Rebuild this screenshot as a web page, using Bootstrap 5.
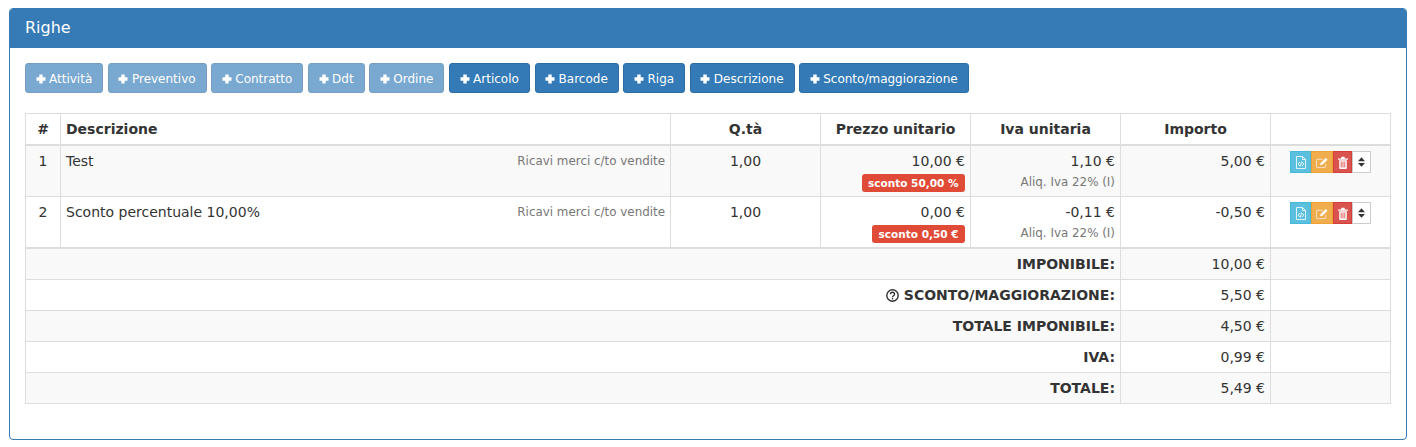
<!DOCTYPE html>
<html lang="it">
<head>
<meta charset="utf-8">
<title>Righe</title>
<link href="https://cdn.jsdelivr.net/npm/bootstrap@5.3.0/dist/css/bootstrap.min.css" rel="stylesheet">
<style>
body{font-family:"DejaVu Sans",sans-serif;font-size:14px;line-height:20px;color:#333;background:#fff;padding:8px 9px 7px 9px}
.righe-box{border:1px solid #367ab6;border-radius:4px;height:432px;overflow:hidden}
.righe-head{background:#367ab6;color:#fff;font-size:16px;line-height:22px;padding:8px 15px 9px;height:39px}
.righe-body{padding:15px}
.tool-row{display:flex;gap:4.7px;margin-bottom:20px}
.add-btn{font-size:12px;line-height:18px;padding:6px 10px 4px;height:30px;border:1px solid #2e6da4;background:#337ab7;color:#fff;border-radius:3px;white-space:nowrap;display:inline-flex;align-items:center;text-decoration:none}
.add-btn.is-off{opacity:.65;pointer-events:none}
.add-btn svg{width:10px;height:10px;margin:-1px 3.500px 0 -.5px;fill:#fff;flex:none}
.righe-table{width:1365px;table-layout:fixed;border-collapse:collapse;margin:0;color:#333}
.righe-table th,.righe-table td{border:1px solid #ddd;padding:5px;line-height:20px;vertical-align:top;background:transparent;box-shadow:none}
.righe-table thead th{border-bottom:2px solid #ddd;text-align:center;height:31px}
.righe-table thead th.th-left{text-align:left}
.righe-table tr.zebra>td{background:#f9f9f9}
.righe-table tbody.lines td{padding-bottom:4px}
.righe-table tbody.totals tr:first-child td{border-top:2px solid #ddd}
.righe-table tbody.totals td{height:31px}
.righe-table tbody.lines tr:last-child td{border-bottom:2px solid #ddd}
.conto{color:#777;font-size:11.9px;float:right}
.sub-note{color:#777;font-size:11.9px;line-height:17px;margin-top:3px}
.tag-wrap{display:flex;justify-content:flex-end;margin-top:3px}
.sconto-tag{background:#e04b37;color:#fff;font-size:10.5px;font-weight:700;line-height:12px;padding:3px 6.500px;border-radius:3px;white-space:nowrap}
.act-group{display:inline-flex;vertical-align:top;height:22px}
.act-btn{height:22px;display:flex;align-items:center;justify-content:center;border:1px solid}
.act-btn svg{width:12px;height:13px;display:block}
.act-info{background:#5bc0de;border-color:#46b8da;width:21px}
.act-warn{background:#f0ad4e;border-color:#eea236;width:22px}
.act-del{background:#d9534f;border-color:#d43f3a;width:19px}
.act-sort{background:#fff;border-color:#ccc;width:19px}
.act-sort svg{width:7px;height:10px}
.help-ico{width:13px;height:13px;vertical-align:-2px}
</style>
</head>
<body>
<div class="righe-box">
  <div class="righe-head">Righe</div>
  <div class="righe-body">
    <div class="tool-row">
      <a class="add-btn is-off"><svg viewBox="0 0 10 10"><path d="M3.300 .5h3.400v2.800h2.800v3.400H6.700v2.800H3.300V6.700H.5V3.300h2.800z"/></svg>Attività</a>
      <a class="add-btn is-off"><svg viewBox="0 0 10 10"><path d="M3.300 .5h3.400v2.800h2.800v3.400H6.700v2.800H3.300V6.700H.5V3.300h2.800z"/></svg>Preventivo</a>
      <a class="add-btn is-off"><svg viewBox="0 0 10 10"><path d="M3.300 .5h3.400v2.800h2.800v3.400H6.700v2.800H3.300V6.700H.5V3.300h2.800z"/></svg>Contratto</a>
      <a class="add-btn is-off"><svg viewBox="0 0 10 10"><path d="M3.300 .5h3.400v2.800h2.800v3.400H6.700v2.800H3.300V6.700H.5V3.300h2.800z"/></svg>Ddt</a>
      <a class="add-btn is-off"><svg viewBox="0 0 10 10"><path d="M3.300 .5h3.400v2.800h2.800v3.400H6.700v2.800H3.300V6.700H.5V3.300h2.800z"/></svg>Ordine</a>
      <a class="add-btn"><svg viewBox="0 0 10 10"><path d="M3.300 .5h3.400v2.800h2.800v3.400H6.700v2.800H3.300V6.700H.5V3.300h2.800z"/></svg>Articolo</a>
      <a class="add-btn"><svg viewBox="0 0 10 10"><path d="M3.300 .5h3.400v2.800h2.800v3.400H6.700v2.800H3.300V6.700H.5V3.300h2.800z"/></svg>Barcode</a>
      <a class="add-btn"><svg viewBox="0 0 10 10"><path d="M3.300 .5h3.400v2.800h2.800v3.400H6.700v2.800H3.300V6.700H.5V3.300h2.800z"/></svg>Riga</a>
      <a class="add-btn"><svg viewBox="0 0 10 10"><path d="M3.300 .5h3.400v2.800h2.800v3.400H6.700v2.800H3.300V6.700H.5V3.300h2.800z"/></svg>Descrizione</a>
      <a class="add-btn"><svg viewBox="0 0 10 10"><path d="M3.300 .5h3.400v2.800h2.800v3.400H6.700v2.800H3.300V6.700H.5V3.300h2.800z"/></svg>Sconto/maggiorazione</a>
    </div>
    <table class="table righe-table">
      <colgroup><col style="width:35px"><col style="width:610px"><col style="width:150px"><col style="width:150px"><col style="width:150px"><col style="width:150px"><col style="width:120px"></colgroup>
      <thead>
        <tr><th>#</th><th class="th-left">Descrizione</th><th>Q.tà</th><th>Prezzo unitario</th><th>Iva unitaria</th><th>Importo</th><th></th></tr>
      </thead>
      <tbody class="lines">
        <tr class="zebra">
          <td class="text-center">1</td>
          <td><span class="conto">Ricavi merci c/to vendite</span>Test</td>
          <td class="text-center">1,00</td>
          <td class="text-end">10,00 €<div class="tag-wrap"><span class="sconto-tag">sconto 50,00 %</span></div></td>
          <td class="text-end">1,10 €<div class="sub-note">Aliq. Iva 22% (I)</div></td>
          <td class="text-end">5,00 €</td>
          <td class="text-center">
            <div class="act-group">
              <span class="act-btn act-info"><svg viewBox="0 0 12 13"><path d="M1.500.5h6l3 3v9h-9z M7.500.5v3h3" fill="none" stroke="#fff" stroke-opacity=".8"/><path d="M4.800 6 3.300 8l1.500 2M7.200 6l1.500 2-1.500 2M6.500 5.500l-1 5" fill="none" stroke="#fff" stroke-width=".8"/></svg></span>
              <span class="act-btn act-warn"><svg viewBox="0 0 13 13"><path d="M10.500 8v3a1 1 0 0 1-1 1h-8a1 1 0 0 1-1-1V4a1 1 0 0 1 1-1h6" fill="none" stroke="#fff" stroke-opacity=".7"/><path d="M4.500 9.500 5 7l5.500-5.500 2 2L7 9z" fill="#fff"/></svg></span>
              <span class="act-btn act-del"><svg viewBox="0 0 12 13"><path d="M1 2.500h10v1.200H1zM4 2.500 4.600.8h2.800L8 2.500z" fill="#fff"/><path d="M2.200 4.200h7.600V12a1 1 0 0 1-1 1H3.200a1 1 0 0 1-1-1z" fill="#fff"/><path d="M4.200 5.500v6M6 5.500v6M7.800 5.500v6" stroke="#d9534f" stroke-width=".9"/></svg></span>
              <span class="act-btn act-sort"><svg viewBox="0 0 8 11"><path d="M4 0l4 4.500H0zM4 11 0 6.500h8z" fill="#333"/></svg></span>
            </div>
          </td>
        </tr>
        <tr>
          <td class="text-center">2</td>
          <td><span class="conto">Ricavi merci c/to vendite</span>Sconto percentuale 10,00%</td>
          <td class="text-center">1,00</td>
          <td class="text-end">0,00 €<div class="tag-wrap"><span class="sconto-tag">sconto 0,50 €</span></div></td>
          <td class="text-end">-0,11 €<div class="sub-note">Aliq. Iva 22% (I)</div></td>
          <td class="text-end">-0,50 €</td>
          <td class="text-center">
            <div class="act-group">
              <span class="act-btn act-info"><svg viewBox="0 0 12 13"><path d="M1.500.5h6l3 3v9h-9z M7.500.5v3h3" fill="none" stroke="#fff" stroke-opacity=".8"/><path d="M4.800 6 3.300 8l1.500 2M7.200 6l1.500 2-1.500 2M6.500 5.500l-1 5" fill="none" stroke="#fff" stroke-width=".8"/></svg></span>
              <span class="act-btn act-warn"><svg viewBox="0 0 13 13"><path d="M10.500 8v3a1 1 0 0 1-1 1h-8a1 1 0 0 1-1-1V4a1 1 0 0 1 1-1h6" fill="none" stroke="#fff" stroke-opacity=".7"/><path d="M4.500 9.500 5 7l5.500-5.500 2 2L7 9z" fill="#fff"/></svg></span>
              <span class="act-btn act-del"><svg viewBox="0 0 12 13"><path d="M1 2.500h10v1.200H1zM4 2.500 4.600.8h2.800L8 2.500z" fill="#fff"/><path d="M2.200 4.200h7.600V12a1 1 0 0 1-1 1H3.200a1 1 0 0 1-1-1z" fill="#fff"/><path d="M4.200 5.500v6M6 5.500v6M7.800 5.500v6" stroke="#d9534f" stroke-width=".9"/></svg></span>
              <span class="act-btn act-sort"><svg viewBox="0 0 8 11"><path d="M4 0l4 4.500H0zM4 11 0 6.500h8z" fill="#333"/></svg></span>
            </div>
          </td>
        </tr>
      </tbody>
      <tbody class="totals">
        <tr class="zebra"><td colspan="5" class="text-end fw-bold">IMPONIBILE:</td><td class="text-end">10,00 €</td><td></td></tr>
        <tr><td colspan="5" class="text-end fw-bold"><svg class="help-ico" viewBox="0 0 13 13"><circle cx="6.500" cy="6.500" r="5.700" fill="none" stroke="#333" stroke-width="1.400"/><path d="M4.500 5.200c0-2.700 4-2.700 4 0 0 1.500-2 1.500-2 3" fill="none" stroke="#333" stroke-width="1.400"/><rect x="5.800" y="9" width="1.400" height="1.400" fill="#333"/></svg> SCONTO/MAGGIORAZIONE:</td><td class="text-end">5,50 €</td><td></td></tr>
        <tr class="zebra"><td colspan="5" class="text-end fw-bold">TOTALE IMPONIBILE:</td><td class="text-end">4,50 €</td><td></td></tr>
        <tr><td colspan="5" class="text-end fw-bold">IVA:</td><td class="text-end">0,99 €</td><td></td></tr>
        <tr class="zebra"><td colspan="5" class="text-end fw-bold">TOTALE:</td><td class="text-end">5,49 €</td><td></td></tr>
      </tbody>
    </table>
  </div>
</div>
<script src="https://cdn.jsdelivr.net/npm/bootstrap@5.3.0/dist/js/bootstrap.bundle.min.js"></script>
</body>
</html>
